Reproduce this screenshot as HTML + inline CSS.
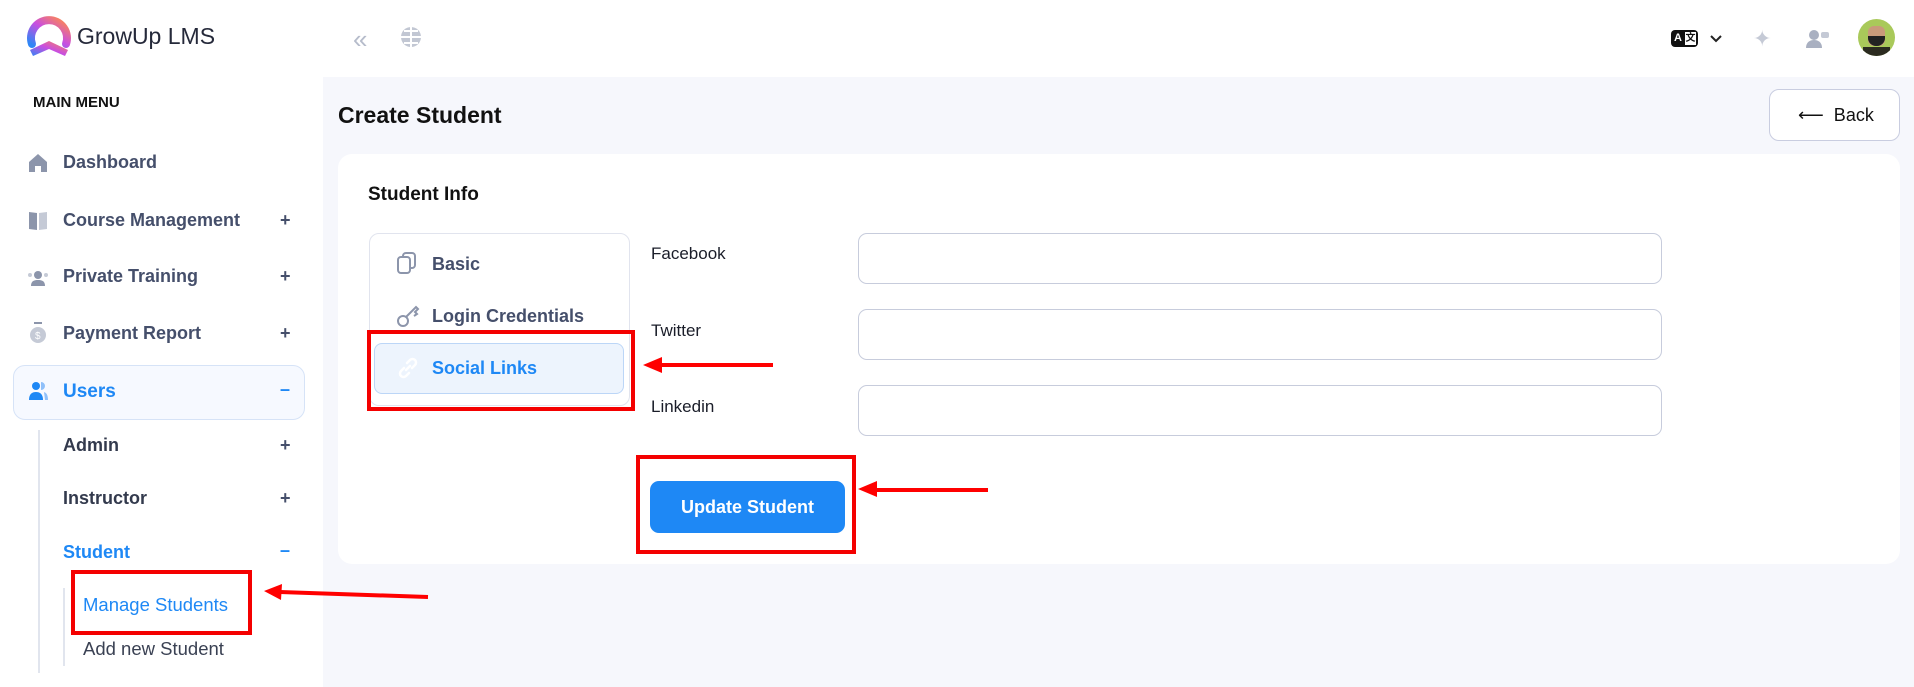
<!DOCTYPE html>
<html><head><meta charset="utf-8"><style>
*{box-sizing:border-box;margin:0;padding:0}
body{width:1914px;height:687px;overflow:hidden;background:#f6f7fc;font-family:"Liberation Sans",sans-serif;position:relative}
.a{position:absolute}
.side{left:0;top:0;width:323px;height:687px;background:#fff}
.hdr{left:0;top:0;width:1914px;height:77px;background:#fff}
.mi{position:absolute;left:63px;font-size:18px;font-weight:bold;color:#454f6b}
.pl{position:absolute;left:280px;font-size:18px;color:#454f6b;font-weight:bold}
.rb{position:absolute;border:4px solid #f40000}
.inp{position:absolute;left:858px;width:804px;height:51px;border:1px solid #c7ccdc;border-radius:9px;background:#fff}
.lbl{position:absolute;left:651px;font-size:17px;color:#1a1d29}
</style></head><body>
<div class="a hdr"></div>
<div class="a side"></div>
<svg class="a" style="left:24px;top:14px" width="50" height="44" viewBox="0 0 50 44">
<defs><linearGradient id="g" x1="0" y1="1" x2="1" y2="0"><stop offset="0" stop-color="#2f86f6"/><stop offset=".5" stop-color="#c94ee0"/><stop offset="1" stop-color="#ff8a4c"/></linearGradient></defs>
<path d="M8 30 A18 18 0 1 1 42 30" fill="none" stroke="url(#g)" stroke-width="8" stroke-linecap="round"/>
<path d="M6 36 L25 27 L44 36 L41 42 L25 35 L9 42 Z" fill="url(#g)"/>
</svg>
<div class="a" style="left:77px;top:23px;font-size:23px;color:#25293a">GrowUp LMS</div>
<div class="a" style="left:353px;top:24px;font-size:26px;color:#b6bccb;letter-spacing:-4px">«</div>
<svg class="a" style="left:400px;top:26px" width="22" height="22" viewBox="0 0 22 22"><circle cx="11" cy="11" r="10" fill="#c2c7d3"/><path d="M1 11H21M11 1V21M4 5h14M4 17h14" stroke="#fff" stroke-width="2"/></svg>
<div class="a" style="left:1671px;top:30px;width:27px;height:17px;background:#111;border-radius:4px;color:#fff;font-size:11px;font-weight:bold;padding-left:3px;line-height:17px;white-space:nowrap;overflow:hidden">A<span style="display:inline-block;background:#fff;color:#111;margin-left:3px;width:11px;height:13px;line-height:13px;font-size:10px;vertical-align:middle;text-align:center;font-family:'Liberation Sans','Noto Sans CJK SC',sans-serif">文</span></div>
<svg class="a" style="left:1709px;top:34px" width="14" height="10"><path d="M2 2l5 5 5-5" stroke="#222" stroke-width="2" fill="none"/></svg>
<div class="a" style="left:1753px;top:26px;font-size:22px;color:#c5cad6">✦</div>
<svg class="a" style="left:1806px;top:29px" width="24" height="20"><circle cx="8" cy="6" r="5" fill="#a9b0c1"/><path d="M0 19c0-6 4-8 8-8s8 2 8 8z" fill="#a9b0c1"/><rect x="15" y="3" width="8" height="6" rx="2" fill="#c4c9d5"/></svg>
<div class="a" style="left:1858px;top:19px;width:37px;height:37px;border-radius:50%;background:#a9c95a;overflow:hidden"><div style="position:absolute;left:10px;top:7px;width:17px;height:20px;background:#c99a7a;border-radius:6px"></div><div style="position:absolute;left:10px;top:17px;width:17px;height:10px;background:#222;border-radius:0 0 8px 8px"></div><div style="position:absolute;left:5px;top:28px;width:27px;height:12px;background:#2b2b20"></div></div>

<div class="a" style="left:33px;top:94px;font-size:15px;font-weight:bold;color:#111">MAIN MENU</div>
<svg class="a" style="left:28px;top:153px" width="20" height="19"><path d="M10 1L1 9v10h6v-6h6v6h6V9z" fill="#8c95ab"/></svg>
<div class="mi" style="top:152px">Dashboard</div>
<svg class="a" style="left:28px;top:211px" width="20" height="19"><path d="M1 1l8 1v17l-8-1z" fill="#8c95ab"/><path d="M11 2l8-1v17l-8 1z" fill="#c5cad6"/></svg>
<div class="mi" style="top:210px">Course Management</div><div class="pl" style="top:210px">+</div>
<svg class="a" style="left:27px;top:267px" width="22" height="20"><circle cx="11" cy="8" r="4" fill="#8c95ab"/><path d="M4 19c0-5 3-6 7-6s7 1 7 6z" fill="#8c95ab"/><circle cx="3" cy="8" r="2" fill="#c5cad6"/><circle cx="19" cy="8" r="2" fill="#c5cad6"/></svg>
<div class="mi" style="top:266px">Private Training</div><div class="pl" style="top:266px">+</div>
<svg class="a" style="left:29px;top:322px" width="18" height="22"><rect x="5" y="0" width="8" height="2" fill="#8c95ab"/><ellipse cx="9" cy="13" rx="8" ry="8" fill="#c5cad6"/><text x="6" y="17" font-size="10" fill="#fff" font-family="Liberation Sans">$</text></svg>
<div class="mi" style="top:323px">Payment Report</div><div class="pl" style="top:323px">+</div>

<div class="a" style="left:13px;top:365px;width:292px;height:55px;border:1px solid #d6e3f7;border-radius:12px;background:#f6f9ff"></div>
<svg class="a" style="left:29px;top:381px" width="20" height="20"><circle cx="7" cy="5" r="4" fill="#1e88f5"/><path d="M0 19c0-6 3-8 7-8s7 2 7 8z" fill="#1e88f5"/><path d="M12 1a4 4 0 010 8M15 11c3 1 4 4 4 8h-3" fill="#8fc0fa"/></svg>
<div class="mi" style="top:381px;color:#1e88f5;font-size:19px">Users</div><div class="pl" style="top:379px;color:#1e88f5">–</div>
<div class="a" style="left:38px;top:430px;width:2px;height:243px;background:#e1e5ee"></div>
<div class="mi" style="top:435px;color:#333a4d">Admin</div><div class="pl" style="top:435px">+</div>
<div class="mi" style="top:488px;color:#333a4d">Instructor</div><div class="pl" style="top:488px">+</div>
<div class="mi" style="top:542px;color:#1e88f5">Student</div><div class="pl" style="top:540px;color:#1e88f5">–</div>
<div class="a" style="left:63px;top:588px;width:2px;height:78px;background:#e1e5ee"></div>
<div class="a" style="left:83px;top:594px;font-size:18.5px;color:#1e88f5">Manage Students</div>
<div class="a" style="left:83px;top:638px;font-size:18.5px;color:#3a4153">Add new Student</div>
<div class="rb" style="left:71px;top:570px;width:181px;height:65px"></div>
<svg class="a" style="left:260px;top:580px" width="170" height="30"><path d="M168 17L20 12" stroke="#f00" stroke-width="4"/><path d="M4 11L22 4L21 20Z" fill="#f00"/></svg>

<div class="a" style="left:338px;top:102px;font-size:23px;font-weight:bold;color:#111">Create Student</div>
<div class="a" style="left:1769px;top:89px;width:131px;height:52px;border:1px solid #c9cde0;border-radius:10px;background:#fff;font-size:18px;color:#111;line-height:50px;padding-left:28px">⟵&nbsp; Back</div>

<div class="a" style="left:338px;top:154px;width:1562px;height:410px;background:#fff;border-radius:14px"></div>
<div class="a" style="left:368px;top:184px;font-size:19px;font-weight:bold;color:#111">Student Info</div>
<div class="a" style="left:369px;top:233px;width:261px;height:173px;border:1px solid #e1e4ee;border-radius:10px;background:#fff"></div>
<svg class="a" style="left:397px;top:252px" width="20" height="22"><rect x="6" y="1" width="12" height="15" rx="3" fill="none" stroke="#8c95ab" stroke-width="2"/><rect x="1" y="5" width="12" height="16" rx="3" fill="#fff" stroke="#8c95ab" stroke-width="2"/></svg>
<div class="a" style="left:432px;top:254px;font-size:18px;font-weight:bold;color:#454f6b">Basic</div>
<svg class="a" style="left:396px;top:304px" width="24" height="24"><circle cx="7" cy="17" r="5" fill="none" stroke="#8c95ab" stroke-width="2"/><path d="M10 13L20 3l2 2-3 3 2 2-3 2" fill="none" stroke="#8c95ab" stroke-width="2"/></svg>
<div class="a" style="left:432px;top:306px;font-size:18px;font-weight:bold;color:#454f6b">Login Credentials</div>
<div class="a" style="left:374px;top:343px;width:250px;height:51px;border:1px solid #bcd6f7;border-radius:8px;background:#edf4fd"></div>
<svg class="a" style="left:396px;top:356px" width="24" height="24"><path d="M10 14l4-4M8 12l-3 3a3.5 3.5 0 005 5l3-3M16 12l3-3a3.5 3.5 0 00-5-5l-3 3" fill="none" stroke="#fff" stroke-width="2.5" stroke-linecap="round"/></svg>
<div class="a" style="left:432px;top:358px;font-size:18px;font-weight:bold;color:#1e88f5">Social Links</div>
<div class="rb" style="left:367px;top:330px;width:268px;height:81px"></div>
<svg class="a" style="left:640px;top:352px" width="135" height="26"><path d="M133 13H18" stroke="#f00" stroke-width="4"/><path d="M3 13L22 5V21Z" fill="#f00"/></svg>

<div class="lbl" style="top:244px">Facebook</div>
<div class="lbl" style="top:321px">Twitter</div>
<div class="lbl" style="top:397px">Linkedin</div>
<div class="inp" style="top:233px"></div>
<div class="inp" style="top:309px"></div>
<div class="inp" style="top:385px"></div>

<div class="a" style="left:650px;top:481px;width:195px;height:52px;background:#1e88f5;border-radius:9px;color:#fff;font-size:18px;font-weight:bold;text-align:center;line-height:52px">Update Student</div>
<div class="rb" style="left:636px;top:455px;width:220px;height:99px"></div>
<svg class="a" style="left:855px;top:476px" width="135" height="26"><path d="M133 14H18" stroke="#f00" stroke-width="4"/><path d="M3 13L22 5V21Z" fill="#f00"/></svg>
</body></html>
